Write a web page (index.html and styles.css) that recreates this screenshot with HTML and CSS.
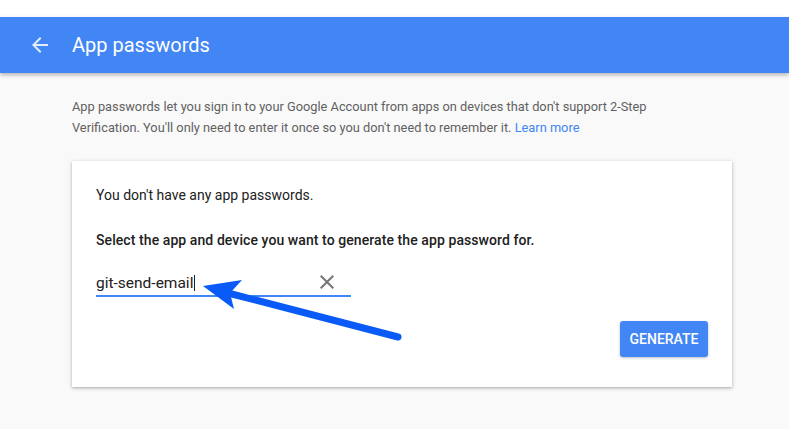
FILE: index.html
```html
<!DOCTYPE html>
<html>
<head>
<meta charset="utf-8">
<link rel="stylesheet" href="styles.css">
</head>
<body>
<div class="topgap"></div>
<header class="appbar">
  <svg class="back" viewBox="0 0 24 24" width="24" height="24"><path d="M20 11H7.83l5.59-5.59L12 4l-8 8 8 8 1.41-1.41L7.83 13H20v-2z" fill="#fff"/></svg>
  <h1 class="title">App passwords</h1>
</header>
<main class="content">
  <p class="intro">App passwords let you sign in to your Google Account from apps on devices that don't support 2-Step Verification. You'll only need to enter it once so you don't need to remember it. <a class="link" href="#">Learn more</a></p>
  <section class="card">
    <p class="none">You don't have any app passwords.</p>
    <p class="select">Select the app and device you want to generate the app password for.</p>
    <div class="field">
      <span class="value">git-send-email</span><span class="caret"></span>
      <svg class="clear" viewBox="0 0 24 24" width="24" height="24"><path d="M19 6.41L17.59 5 12 10.59 6.41 5 5 6.41 10.59 12 5 17.59 6.41 19 12 13.41 17.59 19 19 17.59 13.41 12z" fill="#757575"/></svg>
    </div>
    <div class="actions"><button class="generate">GENERATE</button></div>
  </section>
</main>
<svg class="annotation" width="789" height="429" viewBox="0 0 789 429">
  <line x1="228" y1="293" x2="398" y2="337" stroke="#0a5af7" stroke-width="7" stroke-linecap="round"/>
  <path d="M203 286 L242 280 L230 293 L234 309 Z" fill="#0a5af7"/>
</svg>
</body>
</html>
```
FILE: styles.css
```css
html, body {
  margin: 0;
  padding: 0;
}
body {
  background: #f9f9f9;
  font-family: Roboto, "Liberation Sans", sans-serif;
  width: 789px;
  height: 429px;
  overflow: hidden;
  position: relative;
}
.topgap {
  height: 17px;
  background: #fff;
}
.appbar {
  height: 56px;
  background: #4285f4;
  display: flex;
  align-items: center;
  padding-left: 28px;
  gap: 20px;
  box-shadow: 0 2px 4px rgba(0,0,0,0.28);
  position: relative;
  z-index: 1;
}
.back {
  opacity: 0.85;
}
.title {
  margin: 0;
  color: #fff;
  font-size: 20px;
  font-weight: 400;
}
.content {
  padding: 23px 0 0 72px;
}
.intro {
  margin: 0;
  width: 610px;
  font-size: 12.8px;
  line-height: 21px;
  color: #616161;
}
.link {
  color: #4285f4;
  text-decoration: none;
}
.card {
  margin-top: 23px;
  width: 660px;
  height: 226px;
  box-sizing: border-box;
  background: #fff;
  box-shadow: 0 1px 4px rgba(0,0,0,0.22), 0 1px 2px rgba(0,0,0,0.14);
  padding: 24px 24px 0 24px;
}
.none {
  margin: 0;
  font-size: 14px;
  line-height: 20px;
  color: #212121;
}
.select {
  margin: 25px 0 0;
  font-size: 14px;
  line-height: 20px;
  font-weight: 500;
  letter-spacing: 0.08px;
  color: #212121;
}
.field {
  margin-top: 20px;
  width: 255px;
  height: 27px;
  box-sizing: border-box;
  padding-bottom: 2px;
  border-bottom: 2px solid #4285f4;
  display: flex;
  align-items: flex-end;
}
.value {
  font-size: 15.5px;
  line-height: 20px;
  color: #212121;
}
.caret {
  width: 1px;
  height: 16px;
  background: #212121;
  margin: 0 0 2px 1px;
}
.clear {
  align-self: center;
  margin-left: auto;
  margin-right: 12px;
}
.actions {
  display: flex;
  justify-content: flex-end;
  margin-top: 24px;
}
.generate {
  width: 88px;
  height: 36px;
  border: none;
  border-radius: 3px;
  background: #4285f4;
  color: #fff;
  font-family: Roboto, "Liberation Sans", sans-serif;
  font-size: 14px;
  font-weight: 500;
  padding: 0;
  box-shadow: 0 1px 3px rgba(0,0,0,0.25);
}
.annotation {
  position: absolute;
  left: 0;
  top: 0;
  pointer-events: none;
}
```
